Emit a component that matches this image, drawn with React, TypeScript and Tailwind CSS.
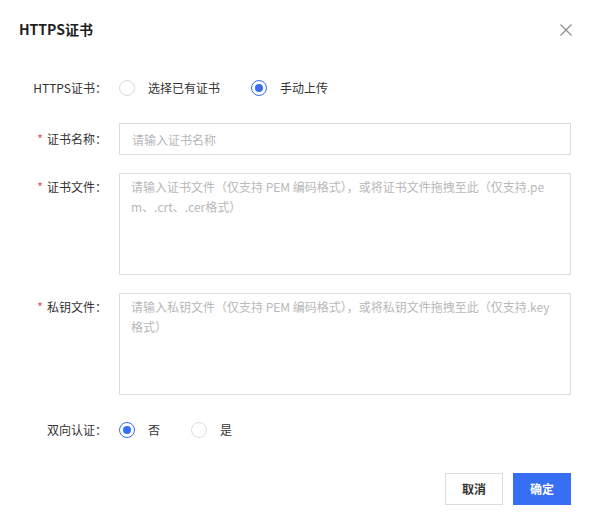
import React from "react";

const font = { fontFamily: '"Noto Sans CJK SC", "Noto Sans", sans-serif' };

function Radio({ checked, label }: { checked?: boolean; label: string }) {
  return (
    <label className="flex items-center gap-[13px] cursor-pointer">
      <span
        className={
          checked
            ? "flex h-4 w-4 items-center justify-center rounded-full border border-[#366ef4] bg-white"
            : "flex h-4 w-4 items-center justify-center rounded-full border border-[#dcdcdc] bg-white"
        }
      >
        {checked ? <span className="h-2 w-2 rounded-full bg-[#366ef4]" /> : null}
      </span>
      <span className="text-[12px] text-[#333333]">{label}</span>
    </label>
  );
}

function Label({ text, required }: { text: string; required?: boolean }) {
  return (
    <div className="flex h-8 w-[88px] shrink-0 items-center justify-end pr-[1px] text-[12px] text-[#333333] leading-8">
      {required ? <span className="mr-[4px] text-[#e34d59]">*</span> : null}
      <span>{text}：</span>
    </div>
  );
}

function TextArea({ lines }: { lines: string[] }) {
  return (
    <div className="h-[102px] flex-1 border border-[#dcdcdc] bg-white px-[11px] pt-[3px] text-[12px] leading-5 text-[#b8b8b8]">
      {lines.map((l, i) => (
        <div key={i} className="whitespace-nowrap">
          {l}
        </div>
      ))}
    </div>
  );
}

export default function App() {
  return (
    <div className="h-[526px] w-[591px] bg-white px-5 pt-[18px]" style={font}>
      <div className="flex h-[22px] items-center justify-between">
        <h1 className="-ml-[1px] text-[14px] font-bold text-[#1f1f1f]">HTTPS证书</h1>
        <button className="mr-[-1px] mt-[2px] flex h-3 w-3 items-center justify-center" aria-label="关闭">
          <svg width="12" height="12" viewBox="0 0 12 12">
            <path d="M0.5 0.5 L11.5 11.5 M11.5 0.5 L0.5 11.5" stroke="#8c8c8c" strokeWidth="1.2" />
          </svg>
        </button>
      </div>

      <div className="mt-[32px] flex flex-col">
        <div className="flex h-8 items-center">
          <Label text="HTTPS证书" />
          <div className="ml-[11px] flex items-center gap-[31px]">
            <Radio label="选择已有证书" />
            <Radio checked label="手动上传" />
          </div>
        </div>

        <div className="mt-[19px] flex h-8 items-center">
          <Label text="证书名称" required />
          <input
            className="ml-[11px] h-8 flex-1 border border-[#dcdcdc] px-[12px] text-[12px] outline-none placeholder:text-[#b8b8b8]"
            placeholder="请输入证书名称"
          />
        </div>

        <div className="mt-[18px] flex items-start">
          <div className="-mt-[2px]">
            <Label text="证书文件" required />
          </div>
          <div className="ml-[11px] flex flex-1">
            <TextArea
              lines={[
                "请输入证书文件（仅支持 PEM 编码格式），或将证书文件拖拽至此（仅支持.pe",
                "m、.crt、.cer格式）",
              ]}
            />
          </div>
        </div>

        <div className="mt-[18px] flex items-start">
          <div className="-mt-[2px]">
            <Label text="私钥文件" required />
          </div>
          <div className="ml-[11px] flex flex-1">
            <TextArea
              lines={[
                "请输入私钥文件（仅支持 PEM 编码格式），或将私钥文件拖拽至此（仅支持.key",
                "格式）",
              ]}
            />
          </div>
        </div>

        <div className="mt-[19px] flex h-8 items-center">
          <Label text="双向认证" />
          <div className="ml-[11px] flex items-center gap-[31px]">
            <Radio checked label="否" />
            <Radio label="是" />
          </div>
        </div>
      </div>

      <div className="mt-[27px] flex justify-end gap-[10px]">
        <button className="h-8 w-[58px] border border-[#dcdcdc] bg-white text-[12px] font-semibold text-[#333333]">
          取消
        </button>
        <button className="h-8 w-[58px] bg-[#366ef4] text-[12px] font-bold text-white">确定</button>
      </div>
    </div>
  );
}
